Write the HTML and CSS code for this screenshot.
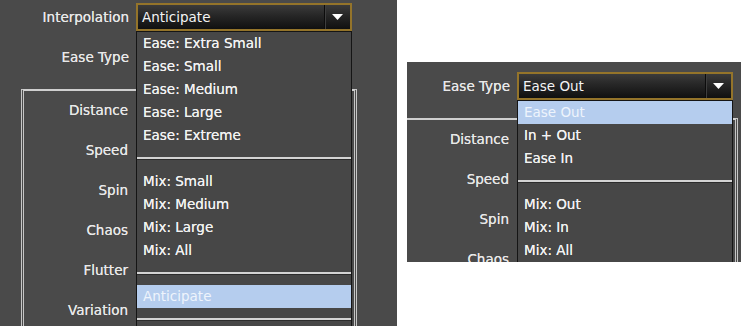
FILE: index.html
```html
<!DOCTYPE html>
<html lang="en">
<head>
    <meta charset="UTF-8">
    <title>Interpolation / Ease Type</title>
    <link rel="stylesheet" href="styles.css">
</head>
<body>
    <div class="canvas">

        <!-- Interpolation dropdown open -->
        <section class="shot">
            <div class="form">
                <div class="row">
                    <span class="lbl">Interpolation</span>
                    <div class="combo">
                        <div class="combo-box">
                            <span class="combo-val">Anticipate</span>
                            <span class="combo-btn"><svg width="11" height="6" viewBox="0 0 11 6"><polygon points="0,0 11,0 5.5,6" fill="#fff"/></svg></span>
                        </div>
                        <ul class="menu">
                            <li>Ease: Extra Small</li>
                            <li>Ease: Small</li>
                            <li>Ease: Medium</li>
                            <li>Ease: Large</li>
                            <li>Ease: Extreme</li>
                            <li class="sep"></li>
                            <li>Mix: Small</li>
                            <li>Mix: Medium</li>
                            <li>Mix: Large</li>
                            <li>Mix: All</li>
                            <li class="sep"></li>
                            <li class="hl">Anticipate</li>
                            <li class="sep"></li>
                        </ul>
                    </div>
                </div>
                <div class="row row-2">
                    <span class="lbl">Ease Type</span>
                    <!-- covered by the open list -->
                    <div class="combo"><div class="combo-box"></div></div>
                </div>
                <div class="group">
                    <div class="grow"><span class="lbl">Distance</span></div>
                    <div class="grow"><span class="lbl">Speed</span></div>
                    <div class="grow"><span class="lbl">Spin</span></div>
                    <div class="grow"><span class="lbl">Chaos</span></div>
                    <div class="grow"><span class="lbl">Flutter</span></div>
                    <div class="grow"><span class="lbl">Variation</span></div>
                </div>
            </div>
        </section>

        <!-- Ease Type dropdown open -->
        <section class="shot shot-b">
            <div class="form">
                <div class="row row-2">
                    <span class="lbl">Ease Type</span>
                    <div class="combo">
                        <div class="combo-box">
                            <span class="combo-val">Ease Out</span>
                            <span class="combo-btn"><svg width="11" height="6" viewBox="0 0 11 6"><polygon points="0,0 11,0 5.5,6" fill="#fff"/></svg></span>
                        </div>
                        <ul class="menu">
                            <li class="hl">Ease Out</li>
                            <li>In + Out</li>
                            <li>Ease In</li>
                            <li class="sep"></li>
                            <li>Mix: Out</li>
                            <li>Mix: In</li>
                            <li>Mix: All</li>
                        </ul>
                    </div>
                </div>
                <div class="group">
                    <div class="grow"><span class="lbl">Distance</span></div>
                    <div class="grow"><span class="lbl">Speed</span></div>
                    <div class="grow"><span class="lbl">Spin</span></div>
                    <div class="grow"><span class="lbl">Chaos</span></div>
                </div>
            </div>
        </section>

    </div>
</body>
</html>
```

FILE: styles.css
```css
body { margin: 0; background: #fff; font-family: "DejaVu Sans", Verdana, sans-serif; font-size: 13.5px; }
.canvas { display: flex; align-items: flex-start; gap: 10px; }

.shot { position: relative; overflow: hidden; width: 397px; height: 326px; background: #4a4a4a; }
.shot-b { width: 334px; height: 200px; margin-top: 62px; }
.shot-b .form { margin: -5px 0 0 -26px; }

.form { padding-top: 3px; width: 360px; }
.lbl { color: #e8e8e8; text-align: right; white-space: nowrap; text-shadow: 0 0 0.4px #e8e8e8; }

.row { display: flex; align-items: center; gap: 7px; height: 28px; }
.row > .lbl { width: 129px; }
.row-2 { margin-top: 12px; }

/* combo box */
.combo { position: relative; width: 216px; height: 28px; }
.combo-box {
    display: flex; align-items: center; height: 28px; box-sizing: border-box;
    border: 2px solid #94742a; background: linear-gradient(#3b3b3b, #262626 45%, #101010);
}
.combo-val { flex: 1; padding-left: 4px; color: #f4f4f4; }
.combo-btn {
    display: flex; align-items: center; justify-content: center; width: 25px; height: 100%;
    border-left: 1px solid #0c0c0c; box-shadow: inset 1px 0 0 #3e3e3e;
}

/* open list */
.menu {
    position: absolute; z-index: 2; left: 0; top: 28px; width: 214px; margin: 0; padding: 0;
    list-style: none; background: #474747; border: 1px solid #151515; border-width: 1px 1px 2px;
}
.menu li { height: 23px; line-height: 23px; padding-left: 6px; color: #f2f2f2; white-space: nowrap; text-shadow: 0 0 0.4px #f2f2f2; }
.menu li.hl { background: #b5cdee; color: #eef4fc; text-shadow: none; }
.menu li.sep { position: relative; padding: 0; }
.menu li.sep::before {
    content: ""; position: absolute; left: 0; right: 0; top: 10px;
    border-top: 2px solid #d4d4d4; border-bottom: 1px solid #2c2c2c;
}

/* group frame */
.group {
    margin: 18px 0 0 21px; width: 336px; height: 300px; box-sizing: border-box;
    border: 3px double #c6c6c6; border-top: 2px solid #cfcfcf; border-bottom: none;
}
.grow { height: 40px; padding-top: 10px; box-sizing: border-box; display: flex; }
.grow .lbl { width: 104px; line-height: 18px; }
```
